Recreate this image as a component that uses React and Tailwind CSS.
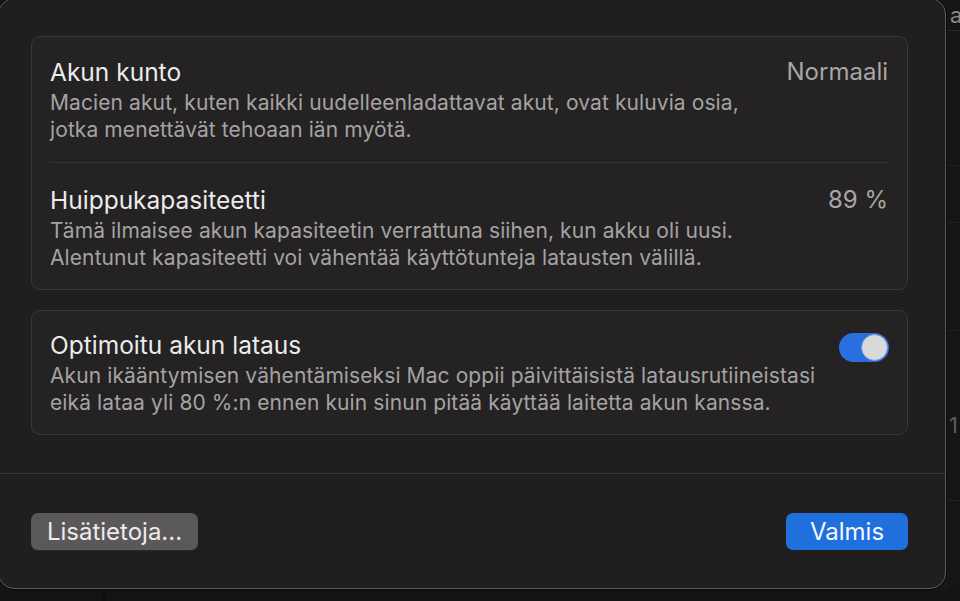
import React from "react";

const font = { fontFamily: "Inter, 'Noto Sans', sans-serif" };

function Toggle() {
  return (
    <div className="w-[50px] h-[29px] rounded-full bg-[#2a6fe0] flex items-center justify-end pr-[1px] shrink-0">
      <div className="w-[27px] h-[27px] rounded-full bg-[#d9d9d9] border border-[#6f95d8]" />
    </div>
  );
}

function Row({ title, value, lines, right }) {
  return (
    <div className="flex items-start justify-between">
      <div className="flex flex-col">
        <div className="text-[24.5px] leading-[28px] text-[#ebebeb]">{title}</div>
        <div className="mt-[3px] text-[21px] leading-[27px] tracking-[0.1px] text-[#a5a3a3]">
          {lines.map((l, i) => (
            <div key={i}>{l}</div>
          ))}
        </div>
      </div>
      {value && <div className="text-[24px] leading-[28px] text-[#a8a6a6]">{value}</div>}
      {right}
    </div>
  );
}

export default function App() {
  return (
    <div className="w-[960px] h-[601px] bg-[#181717] overflow-hidden relative" style={font}>
      {/* background window behind */}
      <div className="absolute left-[948px] top-0 w-[12px] h-[601px] bg-[#161515]">
        <div className="absolute left-[2px] top-[4px] text-[22px] text-[#8a8888] leading-none">a</div>
        <div className="absolute left-0 top-[30px] w-full h-px bg-[#2a2929]" />
        <div className="absolute left-0 top-[165px] w-full h-px bg-[#232222]" />
        <div className="absolute left-0 top-[222px] w-full h-px bg-[#232222]" />
        <div className="absolute left-0 top-[330px] w-full h-px bg-[#232222]" />
        <div className="absolute left-[1px] top-[414px] text-[22px] text-[#5c5b5b] leading-none">1</div>
        <div className="absolute left-0 top-[500px] w-full h-px bg-[#232222]" />
      </div>
      <div className="absolute left-0 top-[590px] w-[960px] h-[11px] bg-[#141313]">
        <div className="absolute left-[103px] top-0 w-[2px] h-full bg-[#0c0c0c]" />
      </div>

      <div className="relative -ml-[2px] -mt-[2px] w-[948px] h-[591px] rounded-[16px] border border-[#5c5a5a] bg-[#201e1e] shadow-[0_0_0_1px_#0a0a0a] flex flex-col">
        <div className="pl-[32px] pr-[37px] pt-[37px] flex flex-col">
          <div className="rounded-[9px] border border-[#393737] bg-[#242222] pl-[18px] pr-[19px] pt-[21px] pb-[18px] flex flex-col">
            <Row
              title="Akun kunto"
              value="Normaali"
              lines={[
                "Macien akut, kuten kaikki uudelleenladattavat akut, ovat kuluvia osia,",
                "jotka menettävät tehoaan iän myötä.",
              ]}
            />
            <div className="h-px bg-[#353333] mt-[19px] mb-[23px]" />
            <Row
              title="Huippukapasiteetti"
              value="89 %"
              lines={[
                "Tämä ilmaisee akun kapasiteetin verrattuna siihen, kun akku oli uusi.",
                "Alentunut kapasiteetti voi vähentää käyttötunteja latausten välillä.",
              ]}
            />
          </div>

          <div className="mt-[20px] rounded-[9px] border border-[#393737] bg-[#242222] pl-[18px] pr-[18px] pt-[20px] pb-[18px] flex flex-col">
            <Row
              title="Optimoitu akun lataus"
              lines={[
                "Akun ikääntymisen vähentämiseksi Mac oppii päivittäisistä latausrutiineistasi",
                "eikä lataa yli 80 %:n ennen kuin sinun pitää käyttää laitetta akun kanssa.",
              ]}
              right={
                <div className="pt-[2px]">
                  <Toggle />
                </div>
              }
            />
          </div>
        </div>

        <div className="mt-[38px] h-px bg-[#363434]" />

        <div className="pl-[32px] pr-[37px] pt-[39px] flex items-center justify-between">
          <button className="h-[37px] w-[167px] rounded-[7px] bg-[#5a5858] text-[24px] text-[#ececec] flex items-center justify-center shadow-[0_1px_0_#2a2828]">
            Lisätietoja...
          </button>
          <button className="h-[37px] w-[122px] rounded-[7px] bg-[#1f6fdc] text-[24px] text-[#f4f8ff] flex items-center justify-center">
            Valmis
          </button>
        </div>
      </div>
    </div>
  );
}
